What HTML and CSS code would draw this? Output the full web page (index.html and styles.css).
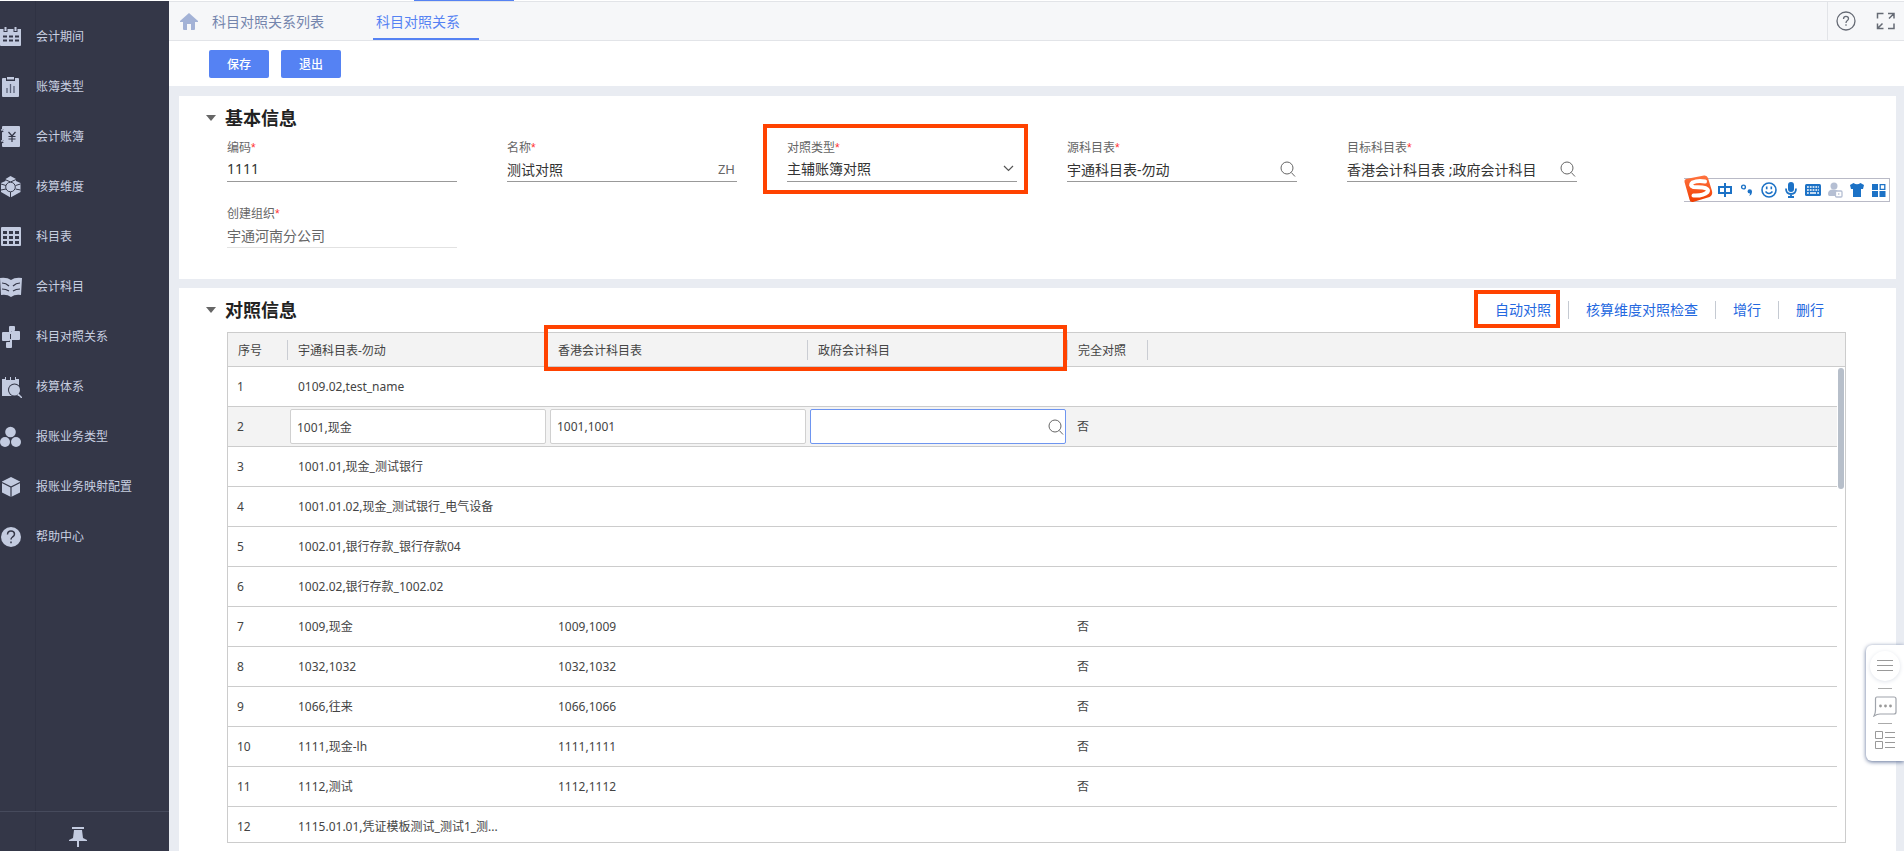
FILE: index.html
```html
<!DOCTYPE html>
<html lang="zh-CN">
<head>
<meta charset="utf-8">
<title>科目对照关系</title>
<link rel="stylesheet" href="styles.css">
</head>
<body>
<svg class="defs" aria-hidden="true">
  <symbol id="search" viewBox="0 0 16 16"><circle cx="7" cy="7" r="6" fill="none" stroke="currentColor"/><path d="M11.3 11.5 15 15.5" fill="none" stroke="currentColor"/></symbol>
</svg>
<div class="app">
  <aside class="sidebar">
    <nav class="menu">
      <a href="#"><svg viewBox="0 0 22 22"><path fill="#c3cbe0" d="M0 3h21v16a1 1 0 0 1-1 1H1a1 1 0 0 1-1-1z"/><path stroke="#343748" stroke-width="4" d="M5.500 1v5M15.500 1v5"/><path stroke="#c3cbe0" stroke-width="2" d="M5.500 1v4M15.500 1v4"/><path stroke="#343748" stroke-width="2" stroke-dasharray="4 2" d="M3 10.500h16M3 14.500h16"/></svg>会计期间</a>
      <a href="#"><svg viewBox="0 0 22 22"><path fill="#c3cbe0" d="M3 2h15a1 1 0 0 1 1 1v17a1 1 0 0 1-1 1H3a1 1 0 0 1-1-1V3a1 1 0 0 1 1-1z"/><path fill="#343748" d="M6 1h9v4H6z"/><path fill="#c3cbe0" d="M7 1h7v2.500H7z"/><path stroke="#5a6178" stroke-width="1.300" d="M7 12v5M10.500 8v9M14 10v7"/></svg>账簿类型</a>
      <a href="#"><svg viewBox="0 0 22 22"><path fill="#c3cbe0" d="M3 0h16a1 1 0 0 1 1 1v19a1 1 0 0 1-1 1H3a1 1 0 0 1-1-1V1a1 1 0 0 1 1-1z"/><path fill="none" stroke="#343748" stroke-width="3" d="M0 5h4M0 16h4"/><path fill="none" stroke="#c3cbe0" stroke-width="1.300" d="M1 4c4-1 4 3 1 3M1 15c4-1 4 3 1 3"/><path fill="none" stroke="#343748" stroke-width="1.200" d="m8.500 6 3.500 4 3.500-4M12 10v6M8.500 10.500h7M8.500 13h7"/></svg>会计账簿</a>
      <a href="#"><svg viewBox="0 0 22 22"><path fill="#c3cbe0" d="m10.500 0 5.500 3v2l4.500 2v9l-10 5.500L1 16V7l4.500-2V3z"/><path fill="none" stroke="#343748" stroke-width="1" d="m5 3.500 5.500 2.500 5.500-2.500M1 8l5 1.500M20.500 8l-5 1.500M1 14l5-1M20.500 14l-5-1"/><circle cx="10.500" cy="11" r="4.800" fill="#c3cbe0" stroke="#343748"/><path stroke="#343748" d="M10.500 16v6"/></svg>核算维度</a>
      <a href="#"><svg viewBox="0 0 22 22"><rect x="1" y="1" width="20" height="19" rx="1" fill="#c3cbe0"/><path fill="#343748" d="M3 5h4v3H3zm6 0h4v3H9zm6 0h4v3h-4zM3 10h4v3H3zm6 0h4v3H9zm6 0h4v3h-4zM3 15h4v3H3zm6 0h4v3H9zm6 0h4v3h-4z"/></svg>科目表</a>
      <a href="#"><svg viewBox="0 0 22 22"><path fill="#c3cbe0" d="M0 2q7-1 11 2 4-3 11-2l-1 17q-6-1-10 2-4-3-10-2z"/><path fill="none" stroke="#343748" stroke-width="1.200" d="M2 7q4 0 7 3M2 13q4 0 7 2M20 7q-4 0-7 3M20 13q-4 0-7 2"/></svg>会计科目</a>
      <a href="#"><svg viewBox="0 0 22 22"><g fill="#c3cbe0"><rect x="9" y="0" width="6" height="5" rx="1"/><rect x="6" y="16" width="6" height="6" rx="1"/><rect x="2" y="6" width="8" height="9" rx="1"/><rect x="11" y="5" width="9" height="9" rx="1"/><path d="M9 3h2v5H9zM10 13h2v5h-2z"/></g></svg>科目对照关系</a>
      <a href="#"><svg viewBox="0 0 22 22"><path fill="#c3cbe0" d="M2 3h3V1h1v3h4V1h1v3h4V1h1v2h3v17H2z"/><circle cx="14.500" cy="14" r="6.500" fill="#343748"/><circle cx="14.500" cy="14" r="5.500" fill="#c3cbe0"/><path stroke="#c3cbe0" stroke-width="1.500" d="m18 18 4 4"/></svg>核算体系</a>
      <a href="#"><svg viewBox="0 0 22 22"><g fill="#c3cbe0"><circle cx="10.500" cy="6" r="5.300"/><circle cx="5" cy="16" r="5"/><circle cx="16" cy="16" r="5"/></g></svg>报账业务类型</a>
      <a href="#"><svg viewBox="0 0 22 22"><path fill="#c3cbe0" d="m11 1 9 4.500v11L11 21l-9-4.500v-11z"/><path fill="none" stroke="#343748" stroke-width="1.200" d="M2 6.500 11 11l9-4.500M11 11v11"/></svg>报账业务映射配置</a>
      <a href="#"><svg viewBox="0 0 22 22"><circle cx="11" cy="11" r="10" fill="#c3cbe0"/><path fill="none" stroke="#343748" stroke-width="1.500" d="M7.500 8.500q.2-3.500 3.500-3.500t3.500 3q0 2-2 3-1.500 1-1.500 2.500M11 15.500v1.800"/></svg>帮助中心</a>
    </nav>
    <button class="pin" aria-label="固定菜单"><svg width="18" height="20" viewBox="0 0 18 20"><path fill="#c3cbe0" d="M3 0h12v2H3zM5 3h8l1 8 4 2v1H0v-1l4-2zM8 14h2v6H8z"/></svg></button>
  </aside>

  <div class="page">
    <header class="tabs">
      <a href="#" class="home" aria-label="首页"><svg width="18" height="17" viewBox="0 0 18 17"><path fill="#a3b2d6" d="M9 0 18 8v1h-3v7q0 1-1 1h-3v-6H7v6H4q-1 0-1-1V9H0V8z"/></svg></a>
      <a href="#" class="tab">科目对照关系列表</a>
      <a href="#" class="tab active" aria-current="page">科目对照关系</a>
      <div class="tools">
        <button aria-label="帮助"><svg width="20" height="20" viewBox="0 0 20 20" fill="none" stroke="#666b75" stroke-width="1.300"><circle cx="10" cy="10" r="9"/><path d="M7.500 8q.1-2.700 2.500-2.700T12.500 7.500q0 1.300-1.400 2.200Q10 10.400 10 12M10 13.300v1.500"/></svg></button>
        <button aria-label="全屏"><svg width="20" height="20" viewBox="0 0 20 20" fill="none" stroke="#666b75" stroke-width="1.500"><path d="M1.500 7.500v-5h6M12 2.500h6v5M18 2.500l-5 5M1.500 12.500v5h6M1.500 17.500l5-5M12 17.500h6v-5"/></svg></button>
      </div>
    </header>
    <div class="toolbar">
      <button>保存</button>
      <button>退出</button>
    </div>

    <main class="content">
      <section class="panel basic">
        <div class="head"><h2>基本信息</h2></div>
        <div class="fields">
          <div class="field">
            <label for="code">编码<i>*</i></label>
            <div class="box"><input id="code" value="1111"></div>
          </div>
          <div class="field">
            <label for="name">名称<i>*</i></label>
            <div class="box"><input id="name" value="测试对照"><span class="lang">ZH</span></div>
          </div>
          <div class="field marked">
            <label for="kind">对照类型<i>*</i></label>
            <div class="box"><select id="kind"><option>主辅账簿对照</option></select><svg class="chevron" width="11" height="7" viewBox="0 0 11 7"><path d="m1 1 4.500 4.500L10 1" fill="none" stroke="#555" stroke-width="1.200"/></svg></div>
          </div>
          <div class="field">
            <label for="src">源科目表<i>*</i></label>
            <div class="box"><input id="src" value="宇通科目表-勿动"><svg class="search"><use href="#search"/></svg></div>
          </div>
          <div class="field">
            <label for="dst">目标科目表<i>*</i></label>
            <div class="box"><input id="dst" value="香港会计科目表 ;政府会计科目"><svg class="search"><use href="#search"/></svg></div>
          </div>
          <div class="field readonly">
            <label for="org">创建组织<i>*</i></label>
            <div class="box"><input id="org" value="宇通河南分公司" readonly></div>
          </div>
        </div>
      </section>

      <section class="panel detail">
        <div class="head">
          <h2>对照信息</h2>
          <div class="actions">
            <a href="#" class="marked">自动对照</a>
            <a href="#">核算维度对照检查</a>
            <a href="#">增行</a>
            <a href="#">删行</a>
          </div>
        </div>
        <div class="grid">
          <div class="clip">
            <table>
              <colgroup><col class="c-no"><col class="c-acct"><col class="c-acct"><col class="c-acct"><col class="c-full"><col><col class="c-bar"></colgroup>
              <thead><tr><th>序号</th><th>宇通科目表-勿动</th><th>香港会计科目表</th><th>政府会计科目</th><th>完全对照</th><th></th><th></th></tr></thead>
              <tbody>
                <tr><td>1</td><td>0109.02,test_name</td><td></td><td></td><td></td><td></td></tr>
                <tr class="editing"><td>2</td><td><input aria-label="宇通科目表-勿动" value="1001,现金"></td><td><input aria-label="香港会计科目表" value="1001,1001"></td><td><div class="lookup"><input aria-label="政府会计科目"><svg class="search"><use href="#search"/></svg></div></td><td>否</td><td></td></tr>
                <tr><td>3</td><td>1001.01,现金_测试银行</td><td></td><td></td><td></td><td></td></tr>
                <tr><td>4</td><td>1001.01.02,现金_测试银行_电气设备</td><td></td><td></td><td></td><td></td></tr>
                <tr><td>5</td><td>1002.01,银行存款_银行存款04</td><td></td><td></td><td></td><td></td></tr>
                <tr><td>6</td><td>1002.02,银行存款_1002.02</td><td></td><td></td><td></td><td></td></tr>
                <tr><td>7</td><td>1009,现金</td><td>1009,1009</td><td></td><td>否</td><td></td></tr>
                <tr><td>8</td><td>1032,1032</td><td>1032,1032</td><td></td><td>否</td><td></td></tr>
                <tr><td>9</td><td>1066,往来</td><td>1066,1066</td><td></td><td>否</td><td></td></tr>
                <tr><td>10</td><td>1111,现金-lh</td><td>1111,1111</td><td></td><td>否</td><td></td></tr>
                <tr><td>11</td><td>1112,测试</td><td>1112,1112</td><td></td><td>否</td><td></td></tr>
                <tr><td>12</td><td>1115.01.01,凭证模板测试_测试1_测...</td><td></td><td></td><td></td><td></td></tr>
              </tbody>
            </table>
          </div>
          <div class="mark-cols"></div>
          <div class="thumb"></div>
        </div>
      </section>
    </main>
  </div>
</div>

<div class="top-accent"></div>

<div class="ime">
  <svg class="logo" width="30" height="30" viewBox="0 0 30 30"><defs><linearGradient id="flame" x2="0" y2="1"><stop stop-color="#ff7440"/><stop offset="1" stop-color="#f03c00"/></linearGradient></defs><path fill="url(#flame)" d="M2 5 20 1.500q3-.5 4 2.500l4 13q1 4-2.500 6L9 28q-3 .5-3.500-2.500L.500 8q-.5-2.500 1.500-3z"/><path fill="none" stroke="#fff" stroke-width="4" stroke-linecap="round" d="M21 7.500Q14 6 8.500 8.500q-3.500 3 1 4.500l9 .500q7 1 5 4.500-4 4-14 3.500"/></svg>
  <svg width="16" height="16" viewBox="0 0 16 16" fill="none" stroke="#1c72c6" stroke-width="2"><path d="M2 5h12v6H2zM8 1v14"/></svg>
  <svg width="16" height="16" viewBox="0 0 16 16"><circle cx="4.500" cy="5" r="1.900" fill="none" stroke="#1c72c6" stroke-width="1.400"/><path fill="#1c72c6" d="M8.500 9.500a2.200 2.200 0 1 1 4.500 0q0 3.500-3 4.500 1-1 1-2.500-2.500 0-2.500-2z"/></svg>
  <svg width="16" height="16" viewBox="0 0 16 16" fill="none" stroke="#1c72c6" stroke-width="1.600"><circle cx="8" cy="8" r="7"/><path d="M5.700 4.500v2.800M10.300 4.500v2.800M4.500 9.500q3.500 4 7 0"/></svg>
  <svg width="16" height="16" viewBox="0 0 16 16"><rect x="5" y="0" width="6" height="10" rx="3" fill="#1c72c6"/><path fill="none" stroke="#1c72c6" stroke-width="1.800" d="M3 6.500q0 5.500 5 5.500t5-5.500M8 12v3M5 15h6"/></svg>
  <svg width="16" height="16" viewBox="0 0 16 16"><rect y="2" width="16" height="12" rx="1.500" fill="#1c72c6"/><path stroke="#fff" stroke-width="1.500" d="M2 5h12M2 8h12" stroke-dasharray="1.800 1"/><path stroke="#fff" stroke-width="1.500" d="M2 11h1.800M5 11h6M12.200 11H14"/></svg>
  <svg width="16" height="16" viewBox="0 0 16 16"><circle cx="7" cy="4" r="3.500" fill="#b5bfd3"/><path fill="#b5bfd3" d="M1 12q0-5 6-4.500 3 0 4 1.500v5H2.500Q1 14 1 12z"/><rect x="8.500" y="9" width="6.500" height="6" rx="1" fill="#fff" stroke="#b5bfd3" stroke-width="1.300"/><path stroke="#b5bfd3" d="M11.800 11v2"/></svg>
  <svg width="16" height="16" viewBox="0 0 16 16"><path fill="#1c72c6" d="M4.500 1Q8 3.500 11.500 1L15 3l-1 4h-2v8H4V7H2L1 3z"/></svg>
  <svg width="16" height="16" viewBox="0 0 16 16"><path fill="#1c72c6" d="M1 2h6v6H1zM1 9h6v6H1zM8.500 9h6v6h-6z"/><path fill="none" stroke="#1c72c6" stroke-width="1.300" d="M9.200 2.700h4.600v4.600H9.200z"/></svg>
</div>

<div class="dock">
  <button class="round" aria-label="菜单"><svg width="16" height="14" viewBox="0 0 16 14"><path stroke="#999" d="M0 1.500h16M0 6.500h16M0 11.500h16"/></svg></button>
  <hr>
  <button aria-label="消息"><svg width="24" height="21" viewBox="0 0 24 21"><path fill="none" stroke="#a0a4ab" stroke-width="1.200" d="M4 1h17q2 0 2 2v13q0 2-2 2H7q-3 0-6 2 1.500-3 1.500-6V3Q2.500 1 4 1z"/><g fill="#999"><circle cx="7.500" cy="10" r="1.400"/><circle cx="12.500" cy="10" r="1.400"/><circle cx="17.500" cy="10" r="1.400"/></g></svg></button>
  <hr>
  <button aria-label="列表"><svg width="20" height="18" viewBox="0 0 20 18"><path fill="none" stroke="#999" d="M.5.500h7v7h-7zM.5 10.500h7v7h-7zM10 1.500h10M10 6.500h10M10 11.500h10M10 16.500h10"/></svg></button>
</div>
</body>
</html>
```

FILE: styles.css
```css
* { box-sizing: border-box; }

body {
  margin: 0;
  font: 12px/20px "Noto Sans", "Noto Sans CJK SC", sans-serif;
  color: #444;
  background: #fff;
}

a { color: inherit; text-decoration: none; }
button { padding: 0; border: 0; background: none; font: inherit; display: grid; place-items: center; }
input, select { font: inherit; color: inherit; outline: 0; min-width: 0; }
.defs { display: none; }

.app { display: flex; height: 100vh; overflow: hidden; padding-top: 1px; }

/* Sidebar */
.sidebar {
  flex: none;
  width: 169px;
  display: flex;
  flex-direction: column;
  background: linear-gradient(#2f3243, #2f3243) 35px 0 / 1px 100% no-repeat #343748;
}
.menu { flex: 1; padding-top: 10px; color: #c8cfe0; }
.menu a { display: flex; align-items: center; gap: 14px; height: 50px; padding-top: 1px; }
.menu svg { width: 22px; height: 22px; flex: none; }
.pin { height: 40px; border-top: 1px solid #464a5c; padding: 10px 14px 0 0; }

/* Top bars */
.page { flex: 1; min-width: 0; display: flex; flex-direction: column; background: #e9ecf2; }
.tabs {
  display: flex;
  flex: none;
  height: 40px;
  padding-left: 11px;
  border: solid #e2e4e8;
  border-width: 1px 0;
  background: #f6f7f9;
  font-size: 14px;
}
.home { display: grid; place-items: center; width: 18px; }
.tab { display: grid; align-items: center; padding: 2px 4px 0; color: #7485ad; margin-left: 10px; }
.tab.active { margin-left: 45px; padding: 4px 19px 0 3px; color: #5582f3; border-bottom: 2px solid #5582f3; }
.tools { margin-left: auto; display: flex; gap: 20px; padding: 0 8px; border-left: 1px solid #e2e4e8; }
.toolbar { flex: none; display: flex; gap: 12px; height: 45px; padding: 9px 40px 8px; background: #fff; }
.toolbar button { width: 60px; padding-top: 2px; border-radius: 2px; background: #5582f3; color: #fff; font-weight: 500; }

/* Panels */
.content { flex: 1; min-height: 0; display: flex; flex-direction: column; gap: 9px; padding: 10px 8px 0 10px; }
.panel { background: #fff; padding: 8px 50px 8px 48px; }
.basic { flex: none; padding-bottom: 31px; }
.detail { flex: 1; min-height: 0; display: flex; flex-direction: column; }
.head { flex: none; display: flex; align-items: center; justify-content: space-between; height: 28px; margin-left: -21px; }
h2 { display: flex; align-items: center; gap: 9px; margin: 0; font-size: 18px; font-weight: 700; color: #222; }
h2::before { content: ""; border: solid transparent; border-width: 6px 5px 0; border-top-color: #666; }

.fields { display: grid; grid-template-columns: repeat(auto-fill, 230px); gap: 22px 50px; margin-top: 6px; }
.field { position: relative; }
.field label { display: block; color: #666; }
.field i { color: #f33; font-family: "Liberation Sans", sans-serif; font-style: normal; }
.box { display: flex; align-items: center; height: 24px; padding-bottom: 2px; border-bottom: 1px solid #999; font-size: 14px; color: #333; }
.box input, .box select { flex: 1; width: 100%; height: 21px; padding: 0; border: 0; background: none; appearance: none; }
.lang { padding-right: 2px; font-size: 13px; color: #666; }
.chevron { margin-right: 3px; }
.search { flex: none; width: 16px; height: 16px; margin-right: 1px; color: #666; }
.readonly .box { border-color: #e2e2e2; color: #666; }

.field.marked::after,
.actions .marked::before,
.mark-cols { content: ""; position: absolute; border: 4px solid #ff4200; pointer-events: none; }
.field.marked::after { inset: -14px -11px -12px -24px; }

.actions { display: flex; padding-right: 22px; font-size: 14px; color: #2468e0; }
.actions a { position: relative; }
.actions a + a { margin-left: 17px; padding-left: 18px; background: linear-gradient(#c5cad2, #c5cad2) left / 1px 18px no-repeat; }
.actions .marked::before { inset: -10px -9px -8px -21px; }

/* Table */
.grid { position: relative; flex: 1; min-height: 0; margin-top: 8px; border: 1px solid #ccc; }
.clip { height: 100%; overflow: hidden; }
table { width: 100%; table-layout: fixed; border-collapse: separate; border-spacing: 0; }
.c-no { width: 60px; }
.c-acct { width: 260px; }
.c-full { width: 80px; }
.c-bar { width: 8px; }
th { height: 34px; padding: 2px 10px 0; text-align: left; font-weight: 400; white-space: nowrap; border-bottom: 1px solid #ccc; background: #f3f3f3; }
th:nth-child(-n+5) { background: linear-gradient(#cacdd3, #cacdd3) right / 1px 20px no-repeat #f3f3f3; }
td { height: 40px; padding: 1px 10px 0; border-bottom: 1px solid #ccc; white-space: nowrap; }
td:first-child, td:nth-child(5) { padding-left: 9px; }
.editing td { background: #f3f3f3; padding-top: 0; }
.editing input { display: block; width: 256px; height: 35px; margin-left: -8px; padding: 0 6px; border: 1px solid #d0d0d0; border-radius: 2px; background: #fff; }
.lookup { position: relative; }
.lookup input { border-color: #6e95f0; }
.lookup .search { position: absolute; right: -7px; top: 10px; }
.mark-cols { left: 316px; top: -8px; width: 523px; height: 46px; }
.thumb { position: absolute; right: 1px; top: 35px; width: 6px; height: 121px; border-radius: 3px; background: #b7bfca; }

/* Overlays */
.top-accent { position: absolute; left: 414px; top: 0; width: 100px; height: 1px; background: #5582f3; }
.ime {
  position: absolute;
  right: 14px;
  top: 178px;
  display: flex;
  align-items: center;
  gap: 6px;
  height: 24px;
  padding-right: 2px;
  border: 1px solid #b9bac6;
  border-left: 0;
  background: linear-gradient(#fff, #fff);
}
.logo { margin: -3px -3px 0 0; }
.dock {
  position: absolute;
  right: 0;
  top: 645px;
  width: 38px;
  height: 116px;
  padding: 6px 0 12px;
  display: flex;
  flex-direction: column;
  align-items: center;
  justify-content: space-between;
  border-radius: 6px 0 0 6px;
  background: #fff;
  box-shadow: 0 1px 4px #5d6f96;
}
.dock hr { width: 14px; margin: 0; border: 0; border-top: 1px solid #aaa; }
.round { width: 30px; height: 30px; border-radius: 50%; box-shadow: 0 1px 4px #dfe3ea; }
```
